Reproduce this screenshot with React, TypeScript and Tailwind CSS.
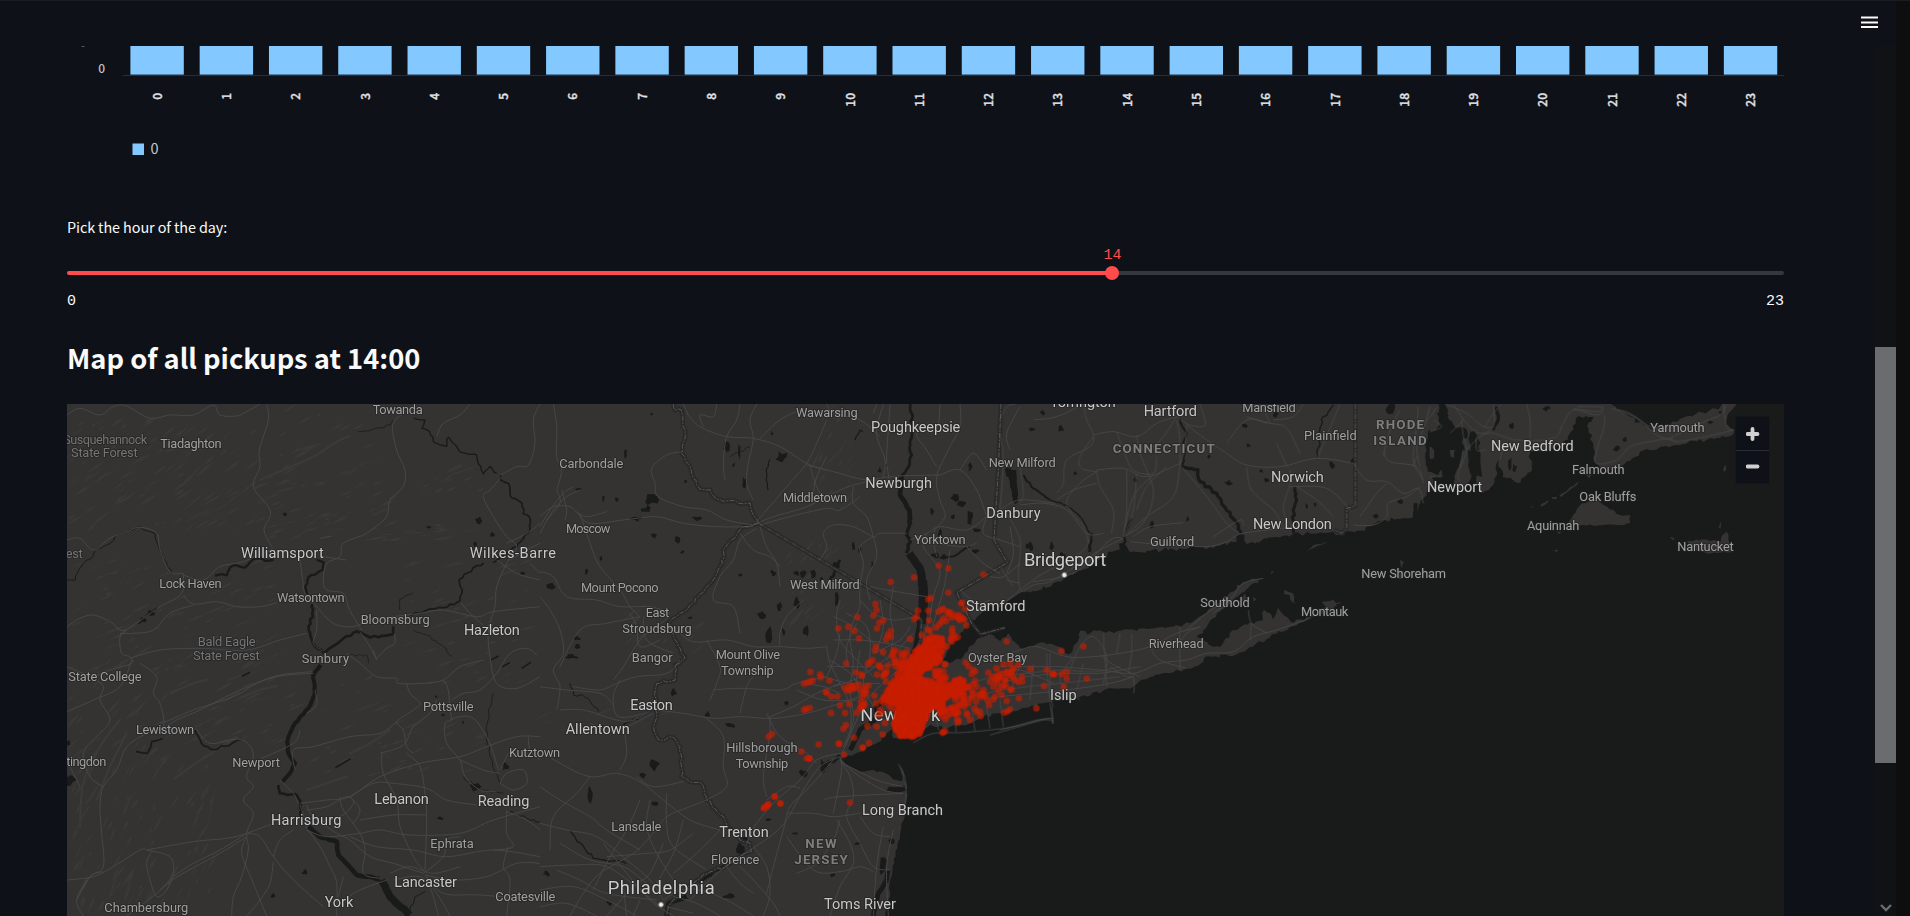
import React from 'react';

/* ---------- helpers ---------- */

function makeRandom(seed: number) {
  let s = seed;
  return () => {
    s = (s * 1664525 + 1013904223) % 4294967296;
    return s / 4294967296;
  };
}

function toPoints(s: string): number[][] {
  return s.trim().split(/\s+/).map((p) => p.split(',').map(Number));
}

function curve(s: string): string {
  const p = toPoints(s);
  let d = `M${p[0][0]} ${p[0][1]}`;
  for (let i = 0; i < p.length - 1; i++) {
    const a = p[Math.max(0, i - 1)];
    const b = p[i];
    const c = p[i + 1];
    const e = p[Math.min(p.length - 1, i + 2)];
    d += `C${(b[0] + (c[0] - a[0]) / 6).toFixed(1)} ${(b[1] + (c[1] - a[1]) / 6).toFixed(1)} ${(c[0] - (e[0] - b[0]) / 6).toFixed(1)} ${(c[1] - (e[1] - b[1]) / 6).toFixed(1)} ${c[0]} ${c[1]}`;
  }
  return d;
}

// Adds small meanders to a line, for coasts, rivers and borders.
function rough(s: string, amount: number, seed: number, closed = false): string {
  const rnd = makeRandom(seed);
  const p = toPoints(s);
  if (closed) p.push(p[0]);
  let d = `M${p[0][0]} ${p[0][1]}`;
  for (let i = 0; i < p.length - 1; i++) {
    const [x1, y1] = p[i];
    const [x2, y2] = p[i + 1];
    const n = Math.max(1, Math.round(Math.hypot(x2 - x1, y2 - y1) / 11));
    for (let k = 1; k <= n; k++) {
      const t = k / n;
      const j = k === n ? 0.3 : 1;
      d += `L${(x1 + (x2 - x1) * t + (rnd() - 0.5) * amount * j).toFixed(1)} ${(y1 + (y2 - y1) * t + (rnd() - 0.5) * amount * j).toFixed(1)}`;
    }
  }
  return closed ? d + 'Z' : d;
}

function blob(x: number, y: number, w: number, h: number, seed: number): string {
  const rnd = makeRandom(seed * 977 + 13);
  let d = '';
  for (let i = 0; i < 9; i++) {
    const a = (i / 9) * Math.PI * 2;
    const r = 0.35 + rnd() * 0.65;
    d += `${i ? 'L' : 'M'}${(x + (Math.cos(a) * w * r) / 2).toFixed(1)} ${(y + (Math.sin(a) * h * r) / 2).toFixed(1)}`;
  }
  return d + 'Z';
}

/* ---------- map data: tiles are drawn at 3 units per pixel ---------- */

const TILE = {
  a: 'translate(180 1200)',
  b: 'translate(1620 1200)',
  c: 'translate(3000 1200)',
  d: 'translate(4290 1200)',
  e: 'translate(2280 1620)',
};

const LAND_B =
  '-1430,0 1410,0 1410,590 1390,600 1350,620 1310,650 1290,670 1260,700 1235,730 1220,760 1200,790 1170,810 1150,830 1120,880 1090,930 1060,985 1035,1008 1005,1033 960,1055 905,1075 915,1090 940,1104 962,1116 1000,1110 1040,1122 1070,1140 1088,1142 1076,1094 1086,1105 1098,1150 1100,1200 1090,1262 1072,1335 1055,1430 1045,1500 1030,1560 -1430,1560';
const LAND_C =
  '-10,0 1322,0 1312,60 1285,95 1278,150 1282,200 1300,240 1275,292 1256,316 1252,350 1200,355 1150,360 1080,390 1020,405 1000,395 930,400 850,407 800,417 740,432 720,402 700,427 640,445 560,445 440,452 390,456 370,427 312,475 280,488 240,512 190,538 150,560 100,570 60,577 30,600 -10,622';
const ISLAND_C =
  '-310,830 -260,800 -235,795 -200,780 -185,760 -150,790 -110,770 -85,735 -60,712 -20,705 0,722 25,700 60,745 85,742 130,728 180,740 205,765 232,725 240,690 262,705 280,690 310,696 440,688 510,680 550,676 600,650 640,622 690,578 730,545 790,535 752,555 715,587 690,612 650,640 620,682 590,712 640,740 660,742 690,700 720,680 750,668 790,662 792,630 812,642 820,662 835,622 850,642 872,665 900,660 950,640 980,618 1025,605 990,632 930,656 830,702 750,742 700,766 620,770 600,790 575,806 520,815 460,830 420,842 400,860 330,866 270,886 200,897 150,907 60,928 0,940 -60,955 -110,975 -170,985 -210,975 -250,1010 -320,1015';
const LAND_D =
  '40,0 545,0 560,30 600,52 660,88 700,78 760,55 820,38 870,22 885,5 925,5 895,45 888,75 912,90 900,108 860,115 830,120 760,130 700,140 640,152 600,182 560,205 510,205 495,190 490,130 470,80 490,50 440,55 430,90 400,130 350,152 300,150 305,215 270,247 220,232 205,180 190,255 160,280 140,240 135,160 112,150 122,240 100,275 70,250 82,200 104,150 95,100 60,60';
const SMALL_LAND_D = [
  '415,372 430,345 455,310 500,298 530,320 570,345 600,345 600,370 570,376 470,376',
  '330,316 355,300 355,306 335,320',
  '366,292 382,290 378,297 366,296',
  '388,286 415,268 447,243 440,256 410,278 395,292',
  '468,225 485,222 478,235',
  '300,322 308,317 306,323',
  '380,395 395,395 388,402',
  '370,450 386,450 380,456',
  '720,410 735,418 728,420',
  '800,452 830,460 905,457 900,430 890,395 878,405 872,425 820,418 770,425',
  '878,210 888,195 886,215',
  '866,385 875,364 872,385',
  '0,60 22,40 32,85 0,95',
  '0,130 12,150 12,175 0,178',
  '60,150 75,150 72,180 62,178',
  '0,230 40,230 40,195 25,225 0,215',
];
const SMALL_LAND_C = [
  '852,570 880,580 885,612 872,600 868,585 852,582',
  '1200,480 1212,485 1205,505',
  '1190,520 1208,520 1206,538 1195,536',
  '918,455 940,436 985,426 960,436 940,444',
  '812,515 823,513 815,522',
  '965,605 1000,600 1010,618 975,618',
  '760,590 770,598 760,604',
  '735,580 742,600 720,605',
];

const RIVERS: { t: keyof typeof TILE; w: number; d: string }[] = [
  { t: 'a', w: 7, d: '465,527 500,525 520,495 555,503 580,478 640,480' },
  { t: 'a', w: 7, d: '770,480 792,488 788,510 745,532 735,560 742,585' },
  { t: 'a', w: 8, d: '757,612 758,640 745,690 765,740 790,760' },
  { t: 'a', w: 8, d: '790,762 840,725 890,695 930,712 1000,702 1000,680' },
  { t: 'a', w: 5, d: '1050,645 1120,628 1200,605 1205,580 1198,540 1240,505 1270,488' },
  { t: 'a', w: 5, d: '1300,488 1370,440 1410,390 1408,350 1390,340 1385,310 1350,285 1345,250 1322,238 1322,225' },
  { t: 'a', w: 4, d: '1310,220 1290,200 1270,222 1255,190 1250,165 1200,155 1165,112 1160,140 1120,125 1110,95 1085,85 1095,60 1060,55' },
  { t: 'a', w: 12, d: '782,795 760,825 765,880 745,925 705,970 682,1020' },
  { t: 'a', w: 12, d: '682,1020 685,1060 705,1090 690,1120 668,1145' },
  { t: 'a', w: 8, d: '655,1155 660,1180 710,1183 722,1210 722,1250' },
  { t: 'a', w: 14, d: '745,1280 780,1310 830,1325 835,1365 890,1425 960,1437' },
  { t: 'a', w: 22, d: '965,1440 990,1490 1050,1545' },
  { t: 'a', w: 5, d: '405,990 425,1030 465,1050 545,1018' },
  { t: 'a', w: 5, d: '228,1055 262,1060 275,1025 308,1015' },
  { t: 'a', w: 3, d: '21,540 45,540 70,490 100,465 112,445 150,430 165,410 210,390 240,380 285,400 295,440 320,490 335,520' },
  { t: 'a', w: 2.5, d: '1020,630 1018,600 1060,578' },
  { t: 'a', w: 2.5, d: '895,95 960,85 990,75 1000,60' },
  { t: 'a', w: 2, d: '1060,690 1100,705 1150,740 1175,770' },
  { t: 'a', w: 2.5, d: '1300,880 1285,940 1280,1020 1300,1100 1320,1150' },
  { t: 'a', w: 2.5, d: '1210,1130 1260,1170 1330,1180' },
  { t: 'a', w: 3, d: '1350,1235 1400,1255 1440,1265' },
  { t: 'a', w: 3, d: '1050,1530 1065,1490 1095,1475' },
  { t: 'a', w: 2, d: '870,765 920,765 925,790' },
  { t: 'b', w: 8, d: '1113,0 1115,100 1110,190 1085,235' },
  { t: 'b', w: 14, d: '1085,230 1080,285 1108,330 1110,375' },
  { t: 'b', w: 10, d: '1110,375 1100,405 1110,425 1100,460' },
  { t: 'b', w: 24, d: '1108,460 1140,505 1150,560' },
  { t: 'b', w: 28, d: '1148,540 1150,610 1142,670' },
  { t: 'b', w: 16, d: '1142,660 1132,720 1118,770' },
  { t: 'b', w: 14, d: '1040,900 1010,920 1005,960 960,990 945,1020 930,1050' },
  { t: 'b', w: 10, d: '900,1065 880,1085 850,1090' },
  { t: 'b', w: 16, d: '1060,1175 1095,1165' },
  { t: 'b', w: 14, d: '1000,1548 1015,1480 1040,1440 1045,1410' },
  { t: 'b', w: 3, d: '90,850 100,885 125,885 145,895 175,935' },
  { t: 'b', w: 3.5, d: '250,975 300,950 335,930' },
  { t: 'b', w: 4, d: '90,1290 120,1330 160,1375 240,1385 260,1390' },
  { t: 'b', w: 2.5, d: '570,170 600,155 630,140' },
  { t: 'b', w: 4, d: '945,120 960,90 970,95' },
  { t: 'b', w: 3.5, d: '685,270 680,220 690,180' },
  { t: 'b', w: 10, d: '600,1330 595,1360' },
  { t: 'b', w: 9, d: '560,1390 500,1430 480,1450' },
  { t: 'b', w: 14, d: '440,1490 385,1510 380,1548' },
  { t: 'b', w: 6, d: '1200,475 1240,470 1290,440' },
  { t: 'b', w: 8, d: '870,545 900,480' },
  { t: 'c', w: 18, d: '40,210 45,290' },
  { t: 'c', w: 6, d: '70,225 100,265 150,300' },
  { t: 'c', w: 4, d: '150,300 200,315 240,350 270,400 272,420' },
  { t: 'c', w: 9, d: '275,400 270,455' },
  { t: 'c', w: 6, d: '540,55 548,80 560,100 550,130 555,160 545,195' },
  { t: 'c', w: 10, d: '545,198 595,210 600,245 650,280 680,330 715,375 722,402' },
  { t: 'c', w: 9, d: '885,260 890,300 880,330 882,400' },
  { t: 'c', w: 4, d: '1000,15 965,60 960,110 950,180' },
  { t: 'c', w: 8, d: '370,440 375,400 395,355' },
  { t: 'c', w: 12, d: '1245,350 1248,310' },
  { t: 'd', w: 10, d: '200,20 205,60 190,90' },
];

const LAKES_A = [
  [675,343,18,16],[1105,381,18,10],[1258,362,26,26],[1297,403,16,16],[1247,432,14,14],[1389,520,20,16],[250,660,20,18],[275,640,32,22],[30,1140,46,50],[26,1028,16,22],
  [1250,1160,40,30],[1140,1255,20,14],[735,1417,24,20],[640,1488,16,18],[1335,1100,24,26],
  [1210,968,8,12],[1128,890,10,10],[1150,945,14,14],
];
const DASHES_A = ['1292,780 1316,768', '1326,800 1350,788', '1385,805 1412,787', '826,1103 872,1076', '546,829 570,817', '236,672 262,645 292,624'];
const LAKES_B = [
  [335,300,46,34],[320,330,34,26],[290,355,44,18],[470,355,32,16],[190,295,10,24],[230,298,12,14],[257,160,12,30],[343,408,18,18],[412,420,18,24],[427,456,16,12],[182,475,10,16],[138,515,12,20],
  [115,268,26,8],[558,142,26,34],[598,155,10,60],[725,172,40,40],[613,250,12,40],[580,195,12,16],[436,244,10,14],[695,100,10,20],[35,560,40,30],[110,715,28,16],[115,740,24,20],[95,770,46,16],
  [402,878,18,24],[502,945,30,24],[570,975,34,26],[340,1090,36,44],[310,1125,26,20],[150,1180,18,60],[348,1210,28,14],[20,1420,22,20],[208,1510,20,16],[335,42,16,10],[665,645,30,28],[688,705,34,56],
  [720,620,20,30],[770,610,22,40],[800,695,22,36],[730,695,12,30],[700,520,18,24],[790,520,30,34],[820,520,18,36],[845,540,14,28],[770,520,18,20],[885,495,18,24],[890,600,22,56],[940,440,12,30],[997,495,10,20],
  [960,450,14,20],[1018,212,14,20],[1040,195,10,18],[1245,290,30,30],[1265,310,28,22],[1290,350,30,46],[1310,390,30,12],[1175,335,14,26],[1185,465,30,20],[1210,470,20,20],[1240,350,16,16],[1200,400,14,30],
  [1290,200,14,26],[1305,455,40,14],[790,1120,30,30],[850,1100,26,50],[765,1300,20,10],[952,1330,22,12],[880,1425,18,14],[600,1350,36,40],[615,1320,16,30],[685,1260,26,10],[1055,1325,20,22],[1030,1400,30,60],
  [740,910,14,14],[565,1490,40,20],[450,655,20,10],[600,525,16,14],[1415,240,20,60],[1425,290,22,40],[1405,215,20,30],[1060,1170,50,24],
];
const LAKES_C = [
  [95,87,26,16],[182,83,24,26],[128,38,18,24],[225,220,14,16],[407,240,14,20],[563,357,10,20],[458,375,18,26],[745,137,18,12],[685,250,28,24],[783,213,16,14],[800,240,18,22],[628,170,16,18],[735,76,20,14],[827,42,18,20],
  [1062,185,20,24],[995,195,24,24],[945,313,10,18],[1200,302,24,20],[1128,348,20,16],[1175,25,44,36],[90,440,26,30],[155,440,14,30],[190,470,24,36],[920,318,10,20],[1345,200,60,120],[1330,100,60,120],[1300,130,40,60],
  [1335,50,30,90],[1385,100,50,50],[1420,130,40,90],[1430,190,40,120],
];
const LAKES_D = [
  [348,25,28,20],[245,77,18,22],[560,145,24,20],[585,118,14,16],[870,38,16,10],[840,68,20,12],[445,75,30,50],[455,110,30,30],[255,205,20,26],[240,190,12,50],[60,110,40,40],
];

const ROADS: { t: keyof typeof TILE; d: string[] }[] = [
  {
    t: 'a',
    d: [
      '21,45 60,25 120,45 160,20 200,18 270,55 330,45 400,45 460,15 480,45 530,48 560,35 600,12',
      '620,12 625,60 598,150 600,200 580,260 625,320 630,350 612,390 635,440',
      '1060,20 1000,70 1010,150 1035,210 1030,260 990,300 980,350 940,385 910,405 850,430 840,470 800,490 790,540 800,570 850,580 865,620 880,650 905,690',
      '1130,110 1150,70 1200,45 1230,12','1322,225 1370,200 1405,195 1425,130 1420,60 1440,12','1325,230 1290,270 1270,290 1300,350 1340,410 1370,440 1340,490 1310,560 1305,620 1285,690 1290,770 1310,850 1370,865 1440,830',
      '21,420 60,415 100,450 150,415 200,395 240,382 290,400 300,450 330,515 370,520','370,525 430,540 480,500 550,485 640,445','370,520 365,580 300,620 250,655 200,690 180,710 185,760 210,770 215,790 150,810 100,830',
      '400,615 330,640 280,690 220,700 180,700','370,585 400,612 470,605 530,620 600,620 651,608','720,480 728,540 735,580 770,620 820,670 880,680 930,660 1000,650 1080,640 1150,630 1250,650 1300,635 1440,620',
      '21,680 60,655 100,645 150,665 180,690 200,690','210,775 300,750 420,745 560,750 660,720 740,700','770,630 770,690 760,730 790,755','900,695 930,740 950,780 940,750','950,775 980,745 1005,730 1003,700',
      '860,760 900,790 950,830 1010,835 1015,850 1090,850 1150,840 1200,800 1270,780','1040,850 1050,880 1080,910 1060,930 1010,965 1030,990 1040,1040 1060,1060','1150,840 1165,870 1170,930 1175,960 1155,970 1160,1030 1200,1080 1215,1130 1260,1170 1310,1175',
      '1170,960 1200,950 1240,955 1280,1010 1300,1060 1315,1110','1175,900 1210,880 1260,870 1310,820 1350,760 1400,745 1430,765','740,940 770,915 765,870','605,1075 700,1030 720,990','755,815 660,825 590,850 520,890 400,930 330,960 300,970',
      '21,800 90,830 130,860 120,900 150,960 110,1010 70,1060 90,1130 130,1160','240,790 290,830 280,880 300,910 310,980 260,1000 200,1040 170,1110 130,1160 120,1220 125,1300 130,1400 90,1430 50,1500','310,985 350,960 420,930 540,870 650,830 760,820','408,985 450,1030 540,1018 580,1060 560,1130 580,1160 550,1200 580,1240 560,1300 565,1350 545,1430 520,1490 515,1548',
      '260,1350 400,1325 500,1315 560,1300 640,1270','560,1300 480,1350 400,1390 340,1430 290,1480 200,1548','560,1310 480,1360 360,1425 300,1470','260,1350 330,1370 340,1420 320,1470 290,1490 270,1440 260,1390 275,1355','21,1440 100,1430 160,1400 240,1350 260,1350','560,1310 545,1360 580,1450 600,1500 620,1548',
      '560,1300 600,1310 640,1370 700,1440 790,1520','640,1370 660,1320 700,1290','640,1385 630,1450 600,1500 560,1548','740,1285 780,1340 810,1400 830,1450 830,1548','850,1500 900,1470 980,1440','740,1290 800,1310 900,1300 960,1290 1050,1305 1200,1300 1300,1260 1440,1220',
      '720,1210 800,1200 870,1190 960,1130 1080,1090 1200,1070 1280,1040 1370,1010 1440,1010','740,1230 800,1220 860,1190 880,1210 840,1250 760,1270','840,1190 850,1230 900,1300 915,1350 910,1420 960,1435','870,1190 940,1150 1000,1150 1100,1165 1160,1200 1250,1215',
      '720,1215 735,1260 740,1285','740,1215 760,1250 830,1300 870,1320 930,1370 1000,1390 1090,1420','870,1310 950,1340 1060,1350 1160,1370 1300,1350 1440,1370','900,1260 1000,1245 1100,1245','965,1060 970,1120 1010,1200 1020,1280 1060,1370 1090,1410',
      '1040,1060 1080,1100 1095,1180 1100,1260 1095,1410','1090,1420 1150,1370 1160,1320 1200,1310','1095,1425 1180,1440 1280,1430 1370,1390 1440,1390','1095,1425 1150,1480 1260,1485 1440,1500','1000,1440 1080,1430 1130,1480 1170,1548','1100,1430 1120,1490 1135,1548','990,1420 1050,1400 1120,1420 1200,1400',
      '1340,1230 1340,1300 1360,1340 1300,1350','1340,1235 1400,1260 1440,1290','1345,1340 1330,1400 1350,1440 1340,1548','1320,1150 1340,1120 1390,1110 1400,1150 1360,1170 1320,1150','1320,1110 1345,1060','1405,1010 1410,1050 1440,1080','1200,1080 1270,1110 1320,1120',
      '960,1060 1030,1035 1060,980 1110,940 1130,900','1200,605 1230,640 1285,690','1340,430 1400,400 1440,370','1350,480 1400,450 1440,430','1310,480 1370,520 1440,540','1410,490 1440,520','780,415 815,408','790,470 860,480','21,935 100,900 180,860 215,780','660,1140 700,1180 715,1210','705,1110 700,1050 760,1040 870,1010 960,1000 1010,965','850,1430 835,1490','870,1190 900,1230 880,1270','60,1160 30,1100','70,1548 50,1500 90,1430 130,1415',
    ],
  },
  {
    t: 'b',
    d: [
      '40,12 50,80 50,170 65,210 50,270','0,400 40,330 80,290 120,270','0,380 30,330 70,280 100,260','0,350 40,320 90,320 110,340','20,360 60,310 50,270','65,270 80,330 75,360','110,335 150,370 250,360 350,350 430,370 530,380 640,380','110,335 140,350 200,335','120,340 150,430 180,500 240,570 270,620 300,650','0,515 40,530 80,590 170,600 240,620 330,620 390,640',
      '430,155 380,165 335,205 345,250 355,290 430,320 500,330 560,360 640,375','440,40 480,80 560,110 640,115 720,140 800,190 860,210','490,80 480,45 520,50 530,12','600,12 590,60 560,110 550,190 555,240','650,12 630,60 640,115 625,190 620,250 640,300','660,115 720,60 780,30','860,60 830,130 800,190 740,260 680,330 640,375','640,375 700,350 800,320 900,270 960,250 1050,230 1200,225',
      '660,375 750,350 860,325 900,330 960,290','810,200 830,260 860,310','860,170 830,230 820,280','1080,240 980,240 880,215 800,195','860,12 880,40 960,60 1020,110','1030,12 1010,100 1035,180 1030,230','1050,12 1045,90 1040,180 1050,250','1200,12 1190,80 1130,100 1160,150 1190,200','1260,12 1260,80 1225,150 1190,230 1200,300 1215,350 1180,400 1190,470','1200,225 1260,210 1310,270 1340,350','1260,210 1300,160 1340,210',
      '1100,400 1020,400 1000,410 940,380 880,375 850,400 860,440 840,480','1000,410 960,440 970,490 960,560 960,620','1000,410 980,350 940,310 940,260','1000,410 1010,470 980,540 990,600','1110,420 1160,400 1200,380 1280,390 1340,350','1160,400 1150,440 1180,480 1200,520 1180,590 1170,650 1150,720','1230,450 1220,520 1205,590 1170,700','1280,440 1330,490 1380,520','1190,430 1270,440 1310,430','1010,12 1000,40',
      '430,12 445,45','650,385 600,420 580,480 540,530 520,600 580,620 600,700','660,380 680,440 710,490 720,560','600,400 640,450 690,470 720,500','0,590 30,630 60,690 70,760 40,810 60,860 50,930','300,650 200,670 120,690 60,800','270,640 290,680 300,740 360,720','390,650 350,680 300,720 250,800 220,840','310,650 320,720 400,760','420,780 380,820 290,830 230,850 180,870 100,860',
      '410,690 460,725 560,720 640,740 720,740 800,745 860,740','720,740 720,700 740,650 790,600','500,720 540,800 530,850 510,900','240,840 220,890 235,950 320,940','350,920 280,960 230,960 130,930 60,930','340,940 250,985 200,990 150,970','0,860 80,870 180,880 215,910','350,930 430,940 520,955 600,950 700,955 800,940 900,910 960,890','520,870 600,865 720,870 770,850 860,830',
      '500,955 550,1010 550,1100 560,1160 500,1200','640,830 620,860 600,940','690,950 690,1000','680,940 720,1010 800,1060 830,1090','0,1050 60,1090 150,1130 230,1120 300,1145 370,1200 450,1260 540,1290','250,980 260,1060 240,1110','150,1130 110,1180 40,1250 30,1350','0,1160 60,1200 150,1250 200,1290 300,1350','430,1145 340,1160 290,1130','500,1200 450,1220 380,1250 340,1300',
      '900,1060 830,1080 780,1140 710,1200 650,1270 620,1330','900,1070 840,1100 790,1170 740,1260 690,1310 600,1370 520,1430 450,1500','880,1080 800,1170 750,1220 730,1290 700,1400 680,1480','900,1080 930,1130 940,1190 920,1250 960,1330 1000,1400 1050,1410','900,1080 960,1130 1030,1170 1090,1180','900,1070 905,1110 890,1190 880,1240','910,1090 1010,1140 1090,1160','850,1200 900,1190 1090,1180','740,1240 820,1240 880,1250 960,1240','740,1310 820,1410 900,1415 960,1400 1000,1415','640,1340 680,1400 690,1480 670,1548','770,1420 830,1390 880,1320 900,1260','960,1250 1000,1300 1050,1310','1030,1280 1010,1400 1000,1548','1060,1290 1040,1400 1045,1548','890,1260 930,1330 940,1390 900,1460 870,1548',
      '0,1270 80,1290 170,1310 260,1380 330,1440 370,1500','60,1330 150,1380 250,1400 320,1450','0,1400 100,1395 200,1400 300,1470 360,1520','50,1410 120,1440 200,1480 350,1500','330,1200 320,1280 350,1360 400,1440','380,1180 380,1270 400,1340 500,1410','340,1300 280,1360 180,1420 130,1480 90,1548','300,1200 260,1290 210,1370 160,1470','370,1330 330,1420 280,1460 200,1548','430,1260 400,1360 350,1450','190,1330 260,1420 330,1500 400,1548','0,1470 100,1460 200,1500 290,1548','0,1520 80,1510 170,1548','460,1300 390,1350 320,1360 200,1370','540,1290 470,1360 400,1420','370,1500 420,1470 480,1470 560,1500 640,1548','400,1490 470,1510 540,1548','380,1520 460,1540','300,1500 280,1548','250,1460 260,1548','560,1400 600,1450 640,1480','600,1400 640,1440 700,1510 720,1548',
      '690,950 760,920 830,880 900,850','790,850 850,860 900,880','680,1200 740,1160 780,1165','690,1005 670,1130 680,1190','860,740 870,790 900,850 930,920 930,1000 905,1060','960,620 930,700 940,790 930,870 940,960 910,1040','880,650 940,680 1010,740 1050,790','880,720 960,720 1040,730 1110,745','900,600 890,650 900,720 950,780 1000,830','1110,780 1040,840 980,900 950,960 915,1040','960,600 1000,640 1060,660 1130,650','990,560 1070,575 1160,590','860,800 930,800 1010,800 1080,790','850,830 930,850 1020,850','900,700 890,760 860,830','920,640 980,680 990,760 970,850 1000,920','1060,560 1050,640 1060,700 1050,770','1000,760 1080,720 1110,680','950,670 920,740 925,800','1020,600 1030,680 1010,750','880,860 960,830 1060,760 1120,700','870,780 940,830 960,900','770,870 850,900 950,900','960,750 950,830 960,890',
      '1260,570 1310,610 1350,600','1340,350 1330,400 1380,420 1440,440','1350,530 1390,530 1440,490','1410,380 1420,460 1400,520','1440,20 1400,100 1410,150',
    ],
  },
  {
    t: 'c',
    d: [
      '0,60 20,20 50,12','250,12 260,60 280,105 270,140 200,180 190,250 170,280','280,105 340,95 410,110 470,70 530,50','350,95 370,150 400,210 460,220 470,170','410,105 420,160 440,210 460,270 450,330 420,380 370,410','530,50 490,110 460,140 430,150','530,50 570,75 615,75 600,12','560,75 555,140 540,195','280,110 240,170 245,205 290,215','290,210 300,260 340,330 335,400','290,210 370,205 440,230 540,190','530,60 540,120 540,195','540,195 520,290 440,350 375,410','460,225 400,290 370,410','380,210 380,330 370,410','410,220 400,330 375,405','500,200 440,260 410,330','170,300 220,270 290,250','60,315 130,310 200,330 260,400 310,400','165,310 60,300 0,330','290,215 240,250 200,310 250,380 265,430','270,400 260,440 210,480 130,520 60,570 0,620','370,415 300,450 240,490 150,545 100,555 40,590 0,620','370,415 330,420 250,500 190,530 100,545','390,425 440,430 520,435 620,440 680,425 720,402 800,390 890,380','400,410 450,380 550,368','545,200 620,290 680,370 718,400','560,75 620,120 680,160 740,195 840,200 950,175 1060,190','680,130 740,60 810,70 860,85 900,160','740,200 755,270 820,330 850,380','880,385 850,330 870,250 870,210','810,70 790,30 760,12','820,60 880,50 910,12','740,50 800,70','950,180 1000,60 1020,12','1060,190 1100,240 1160,245 1210,280 1255,265 1270,310','870,260 980,265 1050,330','890,260 950,300 1000,350','830,130 860,200','1060,375 1120,375 1160,350 1165,310 1220,290 1260,260','1160,250 1130,280 1080,350','1150,150 1170,185 1250,200 1270,250','1255,20 1250,80 1240,180 1270,240','1290,20 1270,90 1250,140 1260,200','1200,30 1170,90 1150,170','1310,20 1280,60 1210,80','1250,170 1240,200','0,100 10,180 0,330','20,340 60,420 55,520 60,570','0,500 40,560','20,540 60,550','60,200 70,280 60,310','100,60 170,50 250,12','730,380 720,360 640,410',
      '0,770 60,750 110,740 200,770 280,770 360,760 450,740 530,700 600,680','180,800 300,810 400,820 480,790 560,780 620,760 700,755 760,710 830,690 930,655','0,850 80,830 200,820 300,820 420,800','210,810 240,740 280,710 320,770 310,850','540,680 540,810','395,700 395,760 385,820','360,700 350,760','0,890 100,880 200,870 330,850 400,830','30,880 60,790','100,790 90,900','250,790 230,870','310,700 320,860','640,640 690,600 730,550 790,535','560,690 620,640 680,600','600,680 560,700 540,730','745,630 755,670 800,700','755,670 750,720','0,990 80,970 150,955 158,970 150,910','330,800 380,830 400,830 402,880','450,740 480,780 560,805','300,765 350,800 420,830','150,760 150,900','0,800 80,800 180,800','0,820 60,810 160,850',
    ],
  },
  {
    t: 'd',
    d: [
      '45,12 110,40 160,80 190,80','70,12 110,70 150,100 190,80 190,12','95,60 100,110 110,150 85,220 90,245','110,150 150,110 190,100 260,120 370,115 400,70 430,30 500,35 520,20','290,12 300,60 300,115','165,80 190,40 215,12','430,25 500,45 520,25 500,20 440,20','525,45 520,90 500,150 500,190 560,180 600,140 660,125 720,115 745,125 850,105 910,90','560,30 620,55 680,105 740,125','545,25 600,40 660,80 700,85','720,115 800,75 870,45 890,12','880,12 890,80 912,90','140,110 140,150 165,150','0,230 35,230','60,100 100,60','200,120 215,140 210,180','10,60 35,80 0,95','100,150 90,200',
    ],
  },
  { t: 'e', d: ['460,608 520,580 600,578 690,570 760,560 830,540 880,535','530,540 535,570','585,520 588,575','635,500 645,575','680,500 690,565','720,480 730,560','875,500 880,550','690,585 760,565 850,540 880,545','610,480 700,455 800,440 900,430 1080,410','600,440 700,410 800,400 900,390 1000,395 1080,380','860,340 865,450 880,500','940,350 900,420 960,480','415,672 430,700 438,740 435,800'] },
];

const BORDERS_B = [
  '400,12 405,30 425,30 430,80 435,120 425,160 450,200 460,235 480,268 510,268 530,298 570,303 600,310 630,310 640,345 656,370',
  '656,370 610,380 575,420 550,450 548,490 520,540 475,590 440,630 400,655 385,668 400,705 415,740 435,775 405,795 405,840 350,850 345,910 350,945 342,990 355,1020 400,1012 420,1040 425,1130 450,1145 485,1150 500,1200 550,1250 560,1275 600,1320 630,1330 635,1355 600,1370 560,1395 510,1415 470,1440 400,1500 385,1520 380,1548',
];
const STRAIGHT_B = ['656,370 1145,660 1140,720 1125,770', '1383,12 1375,210 1362,420 1402,488 1250,578 1295,670 1322,703 1395,683'];
const BORDERS_C = ['1066,12 1066,318 1040,325 1040,385 1025,400 1003,390'];

type Label = [string, number, number, number, number];
// kind: 0 small town, 1 town, 2 city, 3 park, 4 state
const LABELS: { t: keyof typeof TILE; items: Label[] }[] = [
  {
    t: 'a',
    items: [
      ['Susquehannock', 10, 131, 252, 3], ['State Forest', 33, 171, 200, 3], ['Tiadaghton', 301, 143, 184, 0], ['Towanda', 938, 43, 150, 0], ['Forest', -36, 474, 104, 3],
      ['Williamsport', 543, 473, 248, 1], ['Wilkes-Barre', 1229, 475, 259, 1], ['Lock Haven', 298, 564, 187, 0], ['Watsontown', 651, 607, 203, 0], ['Bloomsburg', 902, 672, 207, 0],
      ['Hazleton', 1212, 706, 167, 1], ['Bald Eagle', 413, 739, 174, 3], ['State Forest', 399, 781, 200, 3], ['Sunbury', 725, 789, 142, 0], ['State College', 25, 843, 220, 0],
      ['Pottsville', 1089, 932, 152, 0], ['Lewistown', 228, 1003, 174, 0], ['Kutztown', 1347, 1070, 153, 0], ['Newport', 517, 1101, 143, 0], ['Huntingdon', -46, 1097, 185, 0],
      ['Lebanon', 943, 1213, 163, 1], ['Reading', 1253, 1219, 155, 1], ['Harrisburg', 633, 1274, 211, 1], ['Ephrata', 1111, 1343, 130, 0], ['Lancaster', 1003, 1460, 188, 1],
      ['York', 794, 1520, 86, 1], ['Coatesville', 1306, 1502, 180, 0], ['Chambersburg', 133, 1536, 252, 0],
    ],
  },
  {
    t: 'b',
    items: [
      ['Wawarsing', 768, 51, 185, 0], ['Poughkeepsie', 993, 96, 268, 1], ['Carbondale', 58, 204, 192, 0], ['New Milford', 1346, 201, 201, 0], ['Newburgh', 976, 264, 200, 1],
      ['Middletown', 729, 306, 192, 0], ['Danbury', 1339, 353, 163, 1], ['Moscow', 78, 400, 133, 0], ['Yorktown', 1123, 433, 154, 0], ['Mount Pocono', 123, 575, 233, 0],
      ['West Milford', 750, 568, 209, 0], ['East', 317, 652, 71, 0], ['Stroudsburg', 247, 700, 208, 0], ['Stamford', 1278, 634, 178, 1], ['Bangor', 275, 786, 123, 0],
      ['Mount Olive', 527, 778, 193, 0], ['Township', 543, 824, 158, 0], ['Oyster Bay', 1284, 785, 177, 0], ['Easton', 271, 929, 127, 1], ['Allentown', 77, 1002, 192, 1],
      ['New York', 961, 963, 240, 2], ['Hillsborough', 559, 1056, 214, 0], ['Township', 587, 1103, 158, 0], ['Long Branch', 966, 1244, 243, 1], ['Lansdale', 214, 1294, 150, 0],
      ['Trenton', 538, 1311, 148, 1], ['NEW', 796, 1344, 94, 4], ['JERSEY', 763, 1391, 160, 4], ['Florence', 513, 1392, 145, 0], ['Philadelphia', 203, 1482, 321, 2], ['Toms River', 852, 1528, 216, 1],
    ],
  },
  {
    t: 'c',
    items: [
      ['Torrington', 150, 20, 197, 1], ['Hartford', 431, 47, 160, 1], ['Mansfield', 727, 36, 160, 0], ['CONNECTICUT', 338, 160, 306, 4], ['RHODE', 1128, 87, 144, 4], ['ISLAND', 1120, 135, 160, 4],
      ['Plainfield', 912, 120, 158, 0], ['Norwich', 813, 247, 158, 1], ['New London', 759, 386, 236, 1], ['Newport', 1281, 276, 166, 1], ['Guilford', 450, 439, 133, 0],
      ['Bridgeport', 72, 499, 247, 2], ['Southold', 601, 622, 148, 0], ['Montauk', 903, 647, 142, 0], ['New Shoreham', 1084, 535, 254, 0], ['Riverhead', 446, 745, 165, 0], ['Islip', 150, 899, 80, 1],
    ],
  },
  {
    t: 'd',
    items: [
      ['Yarmouth', 661, 95, 163, 0], ['New Bedford', 183, 154, 248, 1], ['Falmouth', 426, 223, 158, 0], ['Oak Bluffs', 448, 303, 171, 0], ['Aquinnah', 291, 389, 157, 0], ['Nantucket', 742, 453, 169, 0],
    ],
  },
];

const LABEL_STYLE = [
  'fill-[#a0a0a0] text-[38.5px]',
  'fill-[#c8c8c8] text-[43.5px]',
  'fill-[#cecece] text-[55px]',
  'fill-[#757575] text-[38.5px]',
  'fill-[#7e7e7e] text-[40px] font-bold',
];

// Ridges: x, y, width, height, angle in degrees, count
const RIDGES = [
  [30, 60, 560, 330, -35, 110], [620, 20, 330, 240, -28, 24], [600, 230, 400, 190, -22, 50], [40, 480, 620, 330, -24, 80], [30, 780, 300, 340, -45, 50],
  [40, 1080, 420, 440, -62, 110], [300, 820, 420, 220, -28, 40], [760, 830, 520, 300, -20, 40], [1020, 480, 400, 380, -18, 40], [1080, 190, 200, 90, -25, 14],
  [1440, 900, 420, 70, -20, 8], [1650, 620, 300, 130, -38, 16], [2180, 430, 240, 240, -45, 26], [2240, 20, 150, 300, -58, 28], [940, 370, 300, 50, -10, 12],
];

function ridgePaths(): string[] {
  const rnd = makeRandom(71);
  const thin: string[] = [];
  RIDGES.forEach(([x, y, w, h, ang, n]) => {
    for (let i = 0; i < n; i++) {
      const cx = x + rnd() * w;
      const cy = y + rnd() * h;
      const a = ((ang + (rnd() - 0.5) * 16) * Math.PI) / 180;
      const len = 8 + rnd() * 34;
      const t = 1.5 + rnd() * 3.5;
      const dx = Math.cos(a) * len;
      const dy = Math.sin(a) * len;
      const nx = -Math.sin(a) * t;
      const ny = Math.cos(a) * t;
      thin.push(
        `M${(cx - dx).toFixed(0)} ${(cy - dy).toFixed(0)}L${(cx + nx).toFixed(0)} ${(cy + ny).toFixed(0)}L${(cx + dx).toFixed(0)} ${(cy + dy).toFixed(0)}L${(cx - nx).toFixed(0)} ${(cy - ny).toFixed(0)}Z`,
      );
    }
  });
  return thin;
}

const LONG_RIDGES = [
  '600,240 680,205 760,170 830,125 870,108', '345,1135 400,1095 470,1050 530,1010', '550,890 600,870 650,858', '330,880 400,850 440,840',
  '180,960 120,1040 70,1150 60,1280', '200,1000 150,1100 110,1200', '870,1060 930,1030 990,990', '860,1130 800,1150 740,1170',
];

/* ---------- pickups ---------- */

const PICKUPS =
  '536,77 565,85 670,103 462,112 392,126 565,158 512,174 505,178 605,188 604,190 615,207 346,192 350,210 340,227 292,231 235,265 265,261 283,273 297,295 370,241 358,248 351,265 392,273 383,285 378,298 392,290 474,212 470,230 463,237 505,212 507,241 549,206 535,215 567,218 580,225 575,232 595,225 603,232 600,240 612,238 550,235 545,245 538,253 528,262 619,257 577,265 576,275 503,268 510,273 485,285 575,290 593,291 585,295 515,290 505,300 520,300 515,310 540,295 550,315 560,320 575,305 545,210 565,222 571,217 590,232 597,236 558,243 580,285 572,298 530,305 548,325 562,214 596,230 608,236 512,296 508,306 ' +
  '450,297 348,320 345,332 369,336 403,330 400,342 395,348 440,335 435,345 425,352 337,360 324,371 331,367 258,370 355,375 360,380 383,377 375,398 372,405 351,404 287,397 306,408 304,403 151,396 180,403 182,412 158,422 150,425 142,428 132,431 208,422 198,456 200,458 214,470 232,469 254,443 265,440 275,437 270,450 283,443 295,433 300,447 315,440 325,437 310,455 318,460 310,470 303,485 312,490 308,500 300,505 290,518 267,492 240,496 213,519 255,519 149,504 132,510 138,507 343,467 348,490 365,482 360,510 365,518 355,525 322,558 350,560 375,549 258,555 250,566 36,582 26,590 368,583 327,609 308,623 308,623 282,593 237,610 237,612 176,613 252,644 124,635 140,655 148,656 148,655 44,769 44,769 61,790 61,790 25,793 20,799 12,804 25,793 12,804 20,798 270,788 ' +
  '310,462 313,494 308,497 303,500 400,336 377,402 380,395 318,452 378,425 370,408 362,383 ' +
  '740,304 904,333 970,319 555,374 555,373 617,368 626,380 640,390 635,402 645,395 730,373 750,370 775,375 811,387 760,385 755,395 740,400 725,400 715,405 708,410 685,398 697,410 690,425 705,420 712,430 735,420 737,437 725,440 700,440 755,448 752,449 740,395 785,410 787,424 775,426 765,420 715,452 725,465 705,470 700,478 740,483 777,475 750,508 742,515 733,518 829,505 852,438 860,390 880,402 882,403 878,402 905,402 920,396 920,415 911,440 980,416 645,423 650,440 628,442 640,460 655,465 665,460 670,450 670,470 675,465 664,463 668,459 660,470 648,485 682,480 687,495 630,475 625,490 610,475 660,515 662,528 650,515 645,505 630,540 622,525 620,520 612,500 596,543 592,540 594,548 550,577 555,573 547,578 708,418 716,409 757,391 750,400 548,530 556,538 562,528 541,520';

const DENSE =
  '483,318 500,324 530,342 546,354 530,370 502,386 478,402 484,418 512,422 535,434 548,450 556,470 550,494 560,520 552,530 535,508 514,500 502,526 490,548 486,578 470,588 440,592 422,590 402,566 402,548 412,520 410,492 385,484 368,482 370,470 390,444 402,420 430,408 430,388 448,366 466,334';

function inside(x: number, y: number, poly: number[][]) {
  let r = false;
  for (let i = 0, j = poly.length - 1; i < poly.length; j = i++) {
    const [xi, yi] = poly[i];
    const [xj, yj] = poly[j];
    if (yi > y !== yj > y && x < ((xj - xi) * (y - yi)) / (yj - yi) + xi) r = !r;
  }
  return r;
}

const CLUSTERS = [
  [600, 438, 22, 26, 34], [572, 462, 22, 32, 34], [622, 462, 34, 40, 12], [582, 515, 14, 16, 12], [538, 404, 20, 18, 14], [524, 318, 34, 30, 34],
  [725, 410, 46, 28, 8], [430, 385, 26, 30, 16], [410, 352, 26, 20, 6], [556, 430, 26, 24, 16], [380, 500, 26, 20, 4], [510, 345, 34, 28, 24], [270, 445, 24, 10, 3],
  [600, 495, 26, 26, 4],
];

function allPickups(): number[][] {
  const rnd = makeRandom(2014);
  const pts = toPoints(PICKUPS);
  CLUSTERS.forEach(([cx, cy, rx, ry, n]) => {
    for (let i = 0; i < n; i++) {
      const a = rnd() * Math.PI * 2;
      const r = Math.sqrt(rnd());
      pts.push([Math.round(cx + Math.cos(a) * rx * r), Math.round(cy + Math.sin(a) * ry * r)]);
    }
  });
  const poly = toPoints(DENSE);
  for (let i = 0; i < 2600; i++) {
    const x = 360 + rnd() * 215;
    const y = 308 + rnd() * 295;
    if (inside(x, y, poly)) pts.push([Math.round(x), Math.round(y)]);
  }
  return pts;
}

/* ---------- components ---------- */

const HOURS = Array.from({ length: 24 }, (_, i) => i);

function BarChart() {
  return (
    <svg className="block h-[125px] w-full shrink-0 font-['Noto_Sans_CJK_SC',sans-serif]" viewBox="67 46 1717 125">
      <rect x="81.5" y="46" width="3" height="1" fill="#55575e" />
      <text x="105" y="73" textAnchor="end" className="fill-[#c3c4ca] text-[12px] font-medium">0</text>
      <rect x="123" y="75" width="1661" height="1" fill="#2b2d34" />
      {HOURS.map((h) => (
        <g key={h}>
          <rect x={130.4 + h * 69.28} y="46" width="53.4" height="28.6" fill="#83c9ff" />
          <text
            transform={`translate(${161.8 + h * 69.28} 93) rotate(-90)`}
            textAnchor="end"
            stroke="#e2e3e8"
            strokeWidth="0.35"
            className="fill-[#e2e3e8] text-[12px] font-medium"
          >
            {h}
          </text>
        </g>
      ))}
      <rect x="132.5" y="143.5" width="11.5" height="11.5" fill="#83c9ff" />
      <text x="150.5" y="154" className="fill-[#c8c9cf] text-[14.5px]">0</text>
    </svg>
  );
}

function Water({ lakes, seed }: { lakes: number[][]; seed: number }) {
  return <path d={lakes.map(([x, y, w, h], i) => blob(x, y, w * 1.15, h * 1.15, i + seed)).join('')} fill="#191a1a" />;
}

function PickupMap() {
  return (
    <svg className="block h-full w-full font-[Roboto,sans-serif]" viewBox="201 1212 5151 1536">
      <rect x="201" y="1212" width="5151" height="1536" fill="#191a1a" />
      <g fill="#343332">
        <path transform={TILE.b} d={rough(LAND_B, 7, 3, true)} />
        <path transform={TILE.c} d={rough(LAND_C, 14, 5, true)} />
        <path transform={TILE.c} d={rough(ISLAND_C, 10, 7, true)} />
        <path transform={TILE.d} d={rough(LAND_D, 12, 9, true)} />
        <g transform={TILE.d}>{SMALL_LAND_D.map((s, i) => <path key={i} d={rough(s, 5, i + 1, true)} />)}</g>
        <g transform={TILE.c}>{SMALL_LAND_C.map((s, i) => <path key={i} d={rough(s, 4, i + 1, true)} />)}</g>
      </g>
      <g transform={TILE.a}>
        <path d={ridgePaths().join('')} fill="#393938" />
        {LONG_RIDGES.map((s) => <path key={s} d={curve(s)} fill="none" stroke="#3a3a39" strokeWidth="7" strokeLinecap="round" />)}
        {DASHES_A.map((s) => <polyline key={s} points={s} fill="none" stroke="#191a1a" strokeWidth="5" />)}
      </g>
      <g transform={TILE.a}><Water lakes={LAKES_A} seed={1} /></g>
      <g transform={TILE.b}><Water lakes={LAKES_B} seed={41} /></g>
      <g transform={TILE.c}><Water lakes={LAKES_C} seed={131} /></g>
      <g transform={TILE.d}><Water lakes={LAKES_D} seed={171} /></g>
      <g fill="none" stroke="#191a1a" strokeLinejoin="round">
        {RIVERS.map((r, i) => (
          <path key={i} transform={TILE[r.t]} d={rough(r.d, r.w > 10 ? 3 : 8, i + 11)} strokeWidth={r.w} />
        ))}
      </g>
      <g fill="none" stroke="#272727" strokeWidth="13" strokeLinejoin="round" opacity="0.8">
        {BORDERS_B.map((s, i) => <path key={i} transform={TILE.b} d={rough(s, 8, i + 2)} />)}
        {STRAIGHT_B.map((s, i) => <polyline key={i} transform={TILE.b} points={s} />)}
        {BORDERS_C.map((s, i) => <polyline key={i} transform={TILE.c} points={s} />)}
      </g>
      <g fill="none" stroke="#48484a" strokeWidth="2.8" strokeLinejoin="round">
        {ROADS.map((r, i) => <path key={i} transform={TILE[r.t]} d={r.d.map(curve).join('')} />)}
      </g>
      <g fill="none" stroke="#5e5e5e" strokeWidth="2.6" strokeDasharray="16 4 5 4">
        {BORDERS_B.map((s, i) => <path key={i} transform={TILE.b} d={rough(s, 8, i + 2)} />)}
        {STRAIGHT_B.map((s, i) => <polyline key={i} transform={TILE.b} points={s} />)}
        {BORDERS_C.map((s, i) => <polyline key={i} transform={TILE.c} points={s} />)}
      </g>
      {LABELS.map((group) => (
        <g key={group.t} transform={TILE[group.t]} stroke="#222222" strokeOpacity="0.8" strokeWidth="5" strokeLinejoin="round" className="[paint-order:stroke]">
          {group.items.map(([name, x, y, w, kind]) => (
            <text key={name + x} x={x} y={y} textLength={w} className={LABEL_STYLE[kind]}>
              {name}
            </text>
          ))}
        </g>
      ))}
      <circle cx="1983" cy="2714" r="7" fill="#eeeeee" />
      <circle cx="3193" cy="1725" r="7" fill="#eeeeee" />
      <g transform={TILE.e} fill="#c81e00" fillOpacity="0.63">
        {allPickups().map(([x, y], i) => <circle key={i} cx={x} cy={y} r="10" />)}
      </g>
    </svg>
  );
}

function ZoomControl() {
  return (
    <div className="absolute top-[13px] right-[15px] flex w-[33px] flex-col divide-y divide-[#2a2c35] rounded-xs bg-[#0e1117] shadow-[0_0_0_1px_rgba(0,0,0,0.15)]">
      <button aria-label="Zoom in" className="flex h-[34px] items-center justify-center">
        <svg className="size-[14px]" viewBox="0 0 14 14" stroke="#d0d0d1" strokeWidth="3.8" strokeLinecap="round">
          <path d="M6.5 2v10M1.5 7h10" />
        </svg>
      </button>
      <button aria-label="Zoom out" className="flex h-[32px] items-center justify-center">
        <svg className="size-[14px]" viewBox="0 0 14 14" stroke="#d0d0d1" strokeWidth="3.8" strokeLinecap="round">
          <path d="M1.5 6.5h10" />
        </svg>
      </button>
    </div>
  );
}

function HourSlider() {
  return (
    <div className="flex flex-col">
      <label className="h-6 text-[14.4px] leading-6 tracking-[-0.09px] text-[#fafafa]">Pick the hour of the day:</label>
      <div className="relative mt-[32px] h-1 rounded-full bg-[#363840]">
        <div className="h-1 w-[1045px] rounded-l-full bg-[#ff4b4b]" />
        <div className="absolute -top-[5px] left-[1038px] size-[14px] rounded-full bg-[#ff4b4b]" />
        <span className="absolute -top-[25px] left-[1036.5px] font-['Liberation_Mono',monospace] text-[15px] leading-5 text-[#ff4b4b]">14</span>
      </div>
      <div className="mt-[17px] flex justify-between font-['Liberation_Mono',monospace] text-[15px] leading-5 text-[#fafafa]">
        <span>0</span>
        <span>23</span>
      </div>
    </div>
  );
}

export default function App() {
  return (
    <div className="flex h-screen w-full flex-col overflow-hidden border-t border-[#1b1c22] bg-[#0e1117] font-['Noto_Sans_CJK_SC',sans-serif]">
      <div className="flex min-h-0 flex-1">
        <div className="flex min-w-0 flex-1 flex-col">
          <header className="flex h-[45px] shrink-0 items-start justify-end pt-[15px] pr-[18px]">
            <svg className="h-[13px] w-[17px]" viewBox="0 0 17 13" stroke="#fafafa" strokeWidth="2">
              <path d="M0 1.5h17M0 6.5h17M0 11h17" />
            </svg>
          </header>
          <div className="flex min-h-0 flex-1">
            <main className="flex min-w-0 flex-1 flex-col pr-[91px] pl-[67px]">
              <BarChart />
              <div className="mt-[44px]">
                <HourSlider />
              </div>
              <h2 className="mt-[27px] h-[36px] text-[27.3px] leading-[36px] font-bold whitespace-nowrap text-[#fafafa]">Map of all pickups at 14:00</h2>
              <div className="relative mt-auto h-[512px] shrink-0 overflow-hidden bg-[#191a1a]">
                <PickupMap />
                <ZoomControl />
              </div>
            </main>
            <div className="flex w-[21px] shrink-0 flex-col items-center bg-[#111216] pt-[301px] pb-[3px]">
              <div className="h-[416px] w-full bg-[#6b6c70]" />
              <svg className="mt-auto h-[10px] w-[12px]" viewBox="0 0 12 10" fill="none" stroke="#6b6c70" strokeWidth="2.4">
                <path d="M1 2l5 5 5-5" />
              </svg>
            </div>
          </div>
        </div>
        <div className="w-[14px] shrink-0 bg-[#0e0e0e]" />
      </div>
    </div>
  );
}
